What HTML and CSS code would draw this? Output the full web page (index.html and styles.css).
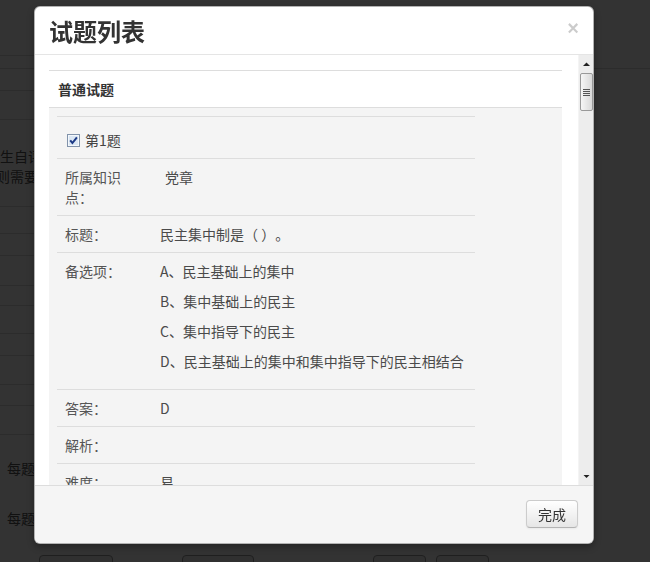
FILE: index.html
```html
<!DOCTYPE html>
<html lang="zh-CN">
<head>
<meta charset="utf-8">
<title>试题列表</title>
<link rel="stylesheet" href="styles.css">
</head>
<body>
<div class="page">
  <div class="topbar"><div class="topbar-sub"></div></div>
  <div class="form">
    <div class="frow h21"></div>
    <div class="frow h28"></div>
    <div class="frow h86 note"><p>生自评分数占总成绩比例</p><p class="cut">则需要教师重新评分</p></div>
    <div class="frow h26"></div>
    <div class="frow h21"></div>
    <div class="frow h29"></div>
    <div class="frow h19"></div>
    <div class="frow h27"></div>
    <div class="frow h21"></div>
    <div class="frow h28"></div>
    <div class="frow h20"></div>
    <div class="frow h28"></div>
  </div>
  <div class="score-lines">
    <p>每题分值</p>
    <p class="second">每题扣分</p>
  </div>
  <div class="page-actions">
    <span class="pbtn w74">保存</span>
    <span class="pbtn w72 gap69">取消</span>
    <span class="pbtn w53 gap119">上一步</span>
    <span class="pbtn w53 gap10">下一步</span>
  </div>
</div>

<div class="backdrop"></div>

<div class="modal">
  <div class="modal-header">
    <button class="close" type="button">×</button>
    <h3>试题列表</h3>
  </div>
  <div class="modal-body">
    <div class="body-scroll">
      <div class="panel">
        <div class="panel-heading">普通试题</div>
        <div class="panel-body">
          <div class="q-table">
            <div class="q-row q-head">
              <label class="q-check">
                <span class="cb"><svg width="13" height="13" viewBox="0 0 13 13"><rect x="0.5" y="0.5" width="12" height="12" fill="#dbe7f4" stroke="#8193ab"/><rect x="1.5" y="1.5" width="10" height="10" fill="none" stroke="#f3f7fb" stroke-width="1"/><path d="M3.2 6.4 L5.4 9 L9.9 3.3" fill="none" stroke="#1c3a86" stroke-width="2"/></svg></span>
                <span>第1题</span>
              </label>
            </div>
            <div class="q-row">
              <div class="q-label">所属知识点：</div>
              <div class="q-value"><span class="indent">党章</span></div>
            </div>
            <div class="q-row">
              <div class="q-label">标题：</div>
              <div class="q-value">民主集中制是（ ）。</div>
            </div>
            <div class="q-row">
              <div class="q-label">备选项：</div>
              <div class="q-value">
                <div class="opt">A、民主基础上的集中</div>
                <div class="opt">B、集中基础上的民主</div>
                <div class="opt">C、集中指导下的民主</div>
                <div class="opt">D、民主基础上的集中和集中指导下的民主相结合</div>
              </div>
            </div>
            <div class="q-row">
              <div class="q-label">答案：</div>
              <div class="q-value">D</div>
            </div>
            <div class="q-row">
              <div class="q-label">解析：</div>
              <div class="q-value"></div>
            </div>
            <div class="q-row">
              <div class="q-label">难度：</div>
              <div class="q-value">易</div>
            </div>
          </div>
        </div>
      </div>
    </div>
    <div class="scrollbar">
      <div class="sb-btn"><svg width="15" height="16" viewBox="0 0 15 16"><path d="M4 11 L7.5 7.5 L11 11 Z" fill="#222"/></svg></div>
      <div class="sb-track">
        <div class="sb-thumb">
          <span class="grip"></span><span class="grip"></span><span class="grip"></span><span class="grip"></span>
        </div>
      </div>
      <div class="sb-btn"><svg width="15" height="16" viewBox="0 0 15 16"><path d="M4.5 6 L10.5 6 L7.5 9 Z" fill="#222"/></svg></div>
    </div>
  </div>
  <div class="modal-footer">
    <button class="btn" type="button">完成</button>
  </div>
</div>
</body>
</html>
```

FILE: styles.css
```css
* { box-sizing: border-box; }

html, body {
  margin: 0;
  padding: 0;
  background: #fff;
  font-family: "Noto Sans CJK SC", "Microsoft YaHei", sans-serif;
  font-size: 14px;
  line-height: 20px;
  color: #555;
  text-spacing-trim: space-all;
}

p { margin: 0; }

/* ---------- page behind the dialog ---------- */
.page { width: 650px; overflow: hidden; }

.topbar { height: 69px; border-bottom: 1px solid #ddd; }
.topbar-sub { width: 300px; height: 56px; border-bottom: 1px solid #ddd; }

.form { width: 570px; }
.frow { border-bottom: 1px solid #ddd; }
.h19 { height: 20px; }
.h20 { height: 21px; }
.h21 { height: 22px; }
.h26 { height: 27px; }
.h27 { height: 28px; }
.h28 { height: 29px; }
.h29 { height: 30px; }
.h86 { height: 87px; }

.note { padding-top: 26px; font-size: 14px; color: #555; }
.note .cut { margin-left: -4px; }

.score-lines { padding: 23px 0 0 7px; color: #555; }
.score-lines .second { margin-top: 30px; }

.page-actions { display: flex; margin-top: 27px; padding-left: 39px; }
.pbtn {
  height: 30px;
  border: 1px solid #999;
  border-radius: 4px;
  background: #eee;
  color: #555;
  text-align: center;
  line-height: 28px;
  flex: none;
}
.w74 { width: 74px; }
.w72 { width: 72px; }
.w53 { width: 53px; }
.gap69 { margin-left: 69px; }
.gap119 { margin-left: 119px; }
.gap10 { margin-left: 10px; }

.backdrop {
  position: fixed;
  inset: 0;
  background: rgba(0, 0, 0, 0.8);
}

/* ---------- dialog ---------- */
.modal {
  position: fixed;
  top: 6px;
  left: 34px;
  width: 560px;
  background: #fff;
  border: 1px solid rgba(0, 0, 0, 0.3);
  border-radius: 6px;
  box-shadow: 0 3px 7px rgba(0, 0, 0, 0.3);
  overflow: hidden;
}

.modal-header {
  padding: 9px 15px 8px 14px;
  border-bottom: 1px solid #e5e5e5;
}
.modal-header h3 {
  margin: 0;
  font-size: 24px;
  line-height: 30px;
  font-weight: bold;
  color: #333;
}
.close {
  float: right;
  margin-top: 2px;
  margin-right: -1px;
  padding: 0;
  border: 0;
  background: none;
  font-family: "Liberation Sans", Arial, sans-serif;
  font-size: 20px;
  font-weight: bold;
  line-height: 20px;
  color: #000;
  opacity: 0.2;
}

.modal-body {
  display: flex;
  height: 430px;
}
.body-scroll {
  flex: 1;
  overflow: hidden;
  padding: 15px 16px 0 14px;
}

.panel { border-top: 1px solid #ddd; }
.panel-heading {
  height: 37px;
  padding-left: 9px;
  line-height: 36px;
  font-weight: bold;
  color: #333;
  border-bottom: 1px solid #ddd;
  background: #fff;
}
.panel-body {
  background: #f4f4f4;
  padding: 8px;
  min-height: 400px;
}

.q-table { width: 418px; }
.q-row {
  display: grid;
  grid-template-columns: 95px 1fr;
  border-top: 1px solid #ddd;
}
.q-label, .q-value { padding: 8px; color: #555; }
.q-value { color: #4a4a4a; }
.indent { margin-left: 5px; }
.opt { margin-bottom: 10px; }

.q-head { display: block; padding: 13px 8px 8px 10px; }
.q-check { display: flex; align-items: center; color: #444; }
.cb { display: block; width: 13px; height: 13px; margin-right: 5px; }
.cb svg { display: block; }

/* fake scrollbar */
.scrollbar {
  width: 15px;
  flex: none;
  display: flex;
  flex-direction: column;
  background: #ededed;
  border-left: 1px solid #f4f4f4;
}
.sb-btn { height: 16px; flex: none; }
.sb-btn svg { display: block; }
.sb-track { flex: 1; padding: 2px 0 0 1px; }
.sb-thumb {
  width: 13px;
  height: 38px;
  border: 1px solid #999;
  border-radius: 2px;
  background: linear-gradient(to right, #f6f6f6, #d9d9d9);
  display: flex;
  flex-direction: column;
  align-items: center;
  justify-content: center;
  gap: 1px;
}
.grip { display: block; width: 7px; height: 1px; background: #555; }

.modal-footer {
  background: #f5f5f5;
  border-top: 1px solid #ddd;
  padding: 14px 15px 15px;
  text-align: right;
}
.btn {
  font-family: inherit;
  font-size: 14px;
  line-height: 20px;
  padding: 3px 11px;
  color: #333;
  border: 1px solid #ccc;
  border-bottom-color: #b3b3b3;
  border-radius: 4px;
  background: linear-gradient(#fff, #e6e6e6);
  box-shadow: inset 0 1px 0 rgba(255, 255, 255, 0.2), 0 1px 2px rgba(0, 0, 0, 0.05);
}
```
